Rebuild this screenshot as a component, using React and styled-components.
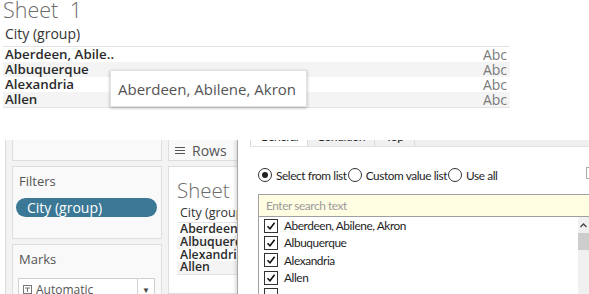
import React from "react";
import styled, { createGlobalStyle } from "styled-components";

const Global = createGlobalStyle`
  html, body { margin: 0; padding: 0; background: #fff; }
  body { width: 589px; height: 294px; overflow: hidden; font-family: "Open Sans", "Noto Sans", sans-serif; }
`;

const Page = styled.div`
  position: relative;
  width: 589px;
  height: 294px;
  overflow: hidden;
  display: flex;
  flex-direction: column;
`;

const TopView = styled.section`
  height: 140px;
  flex-shrink: 0;
  padding-left: 3px;
  box-sizing: border-box;
  position: relative;
`;

const SheetTitle = styled.div`
  font-family: "Open Sans", sans-serif;
  font-weight: 300;
  font-size: ${p => p.$size || 21.5}px;
  line-height: 20px;
  height: 20px;
  color: #6b6b6b;
  word-spacing: ${p => p.$ws || 0}px;
  white-space: nowrap;
`;

const HeaderCell = styled.div`
  font-size: 14px;
  line-height: 20px;
  color: #333;
  padding-left: 2px;
  margin-top: 4px;
`;

const Table = styled.div`
  width: 507px;
  margin-top: 2px;
  border-top: 1px solid #e3e3e3;
  border-bottom: 1px solid #e3e3e3;
`;

const Row = styled.div`
  display: flex;
  justify-content: space-between;
  align-items: center;
  height: 15px;
  background: ${p => (p.$alt ? "#f4f4f4" : "#fff")};
`;

const RowLabel = styled.span`
  font-size: 13.3px;
  font-weight: 600;
  color: #2b2b2b;
  padding-left: 2px;
  line-height: 15px;
`;

const RowValue = styled.span`
  font-size: 14px;
  color: #7a7a7a;
  padding-right: 3px;
  line-height: 15px;
`;

const Tooltip = styled.div`
  position: absolute;
  left: 110px;
  top: 70px;
  width: 197px;
  height: 37px;
  box-sizing: border-box;
  background: #fff;
  box-shadow: 0 1px 3px rgba(0, 0, 0, 0.3);
  border: 1px solid #e2e2e2;
  display: flex;
  align-items: center;
  padding-left: 7px;
  font-size: 15px;
  color: #555;
`;

const Bottom = styled.section`
  flex: 1;
  min-height: 0;
  display: flex;
  position: relative;
  overflow: hidden;
`;

const Sidebar = styled.div`
  margin-left: 5px;
  width: 160px;
  box-sizing: border-box;
  flex-shrink: 0;
  border-left: 1px solid #dcdcdc;
  background: #f3f3f3;
  padding-left: 6px;
  padding-right: 3px;
  display: flex;
  flex-direction: column;
  gap: 5px;
`;

const Panel = styled.div`
  background: #f9f9f9;
  border: 1px solid #dedede;
  border-top: ${p => (p.$open ? "none" : "1px solid #dedede")};
  height: ${p => p.$h}px;
  box-sizing: border-box;
  padding: ${p => p.$pad || "0"};
  flex-shrink: 0;
`;

const PanelTitle = styled.div`
  font-size: 13px;
  color: #555;
  padding-left: 6px;
  line-height: 18px;
`;

const Pill = styled.div`
  margin: ${p => p.$top}px 4px 0 3px;
  height: 19px;
  border-radius: 10px;
  background: #3a7896;
  color: #fff;
  font-size: 14px;
  line-height: 19px;
  padding-left: 11px;
`;

const Dropdown = styled.div`
  margin: 10px 6px 0 5px;
  height: 20px;
  border: 1px solid #cfcfcf;
  background: #fff;
  display: flex;
  align-items: center;
  font-size: 12px;
  color: #555;
`;

const DropText = styled.span`
  flex: 1;
  padding-left: 4px;
  display: flex;
  align-items: center;
  gap: 4px;
`;

const DropArrow = styled.span`
  width: 16px;
  border-left: 1px solid #cfcfcf;
  height: 100%;
  display: flex;
  align-items: center;
  justify-content: center;
  font-size: 8px;
  color: #444;
`;

const Middle = styled.div`
  width: 72px;
  padding-left: 3px;
  box-sizing: border-box;
  background: #f3f3f3;
  display: flex;
  flex-direction: column;
  gap: 5px;
  flex-shrink: 0;
`;

const Shelf = styled.div`
  height: 21px;
  flex-shrink: 0;
  background: #f9f9f9;
  border: 1px solid #dedede;
  border-top: none;
  border-right: none;
  box-sizing: border-box;
  display: flex;
  align-items: center;
  padding-left: 6px;
  gap: 7px;
  font-size: 14px;
  color: #555;
`;

const SheetPane = styled.div`
  flex: 1;
  background: #fff;
  border: 1px solid #dedede;
  border-right: none;
  padding: 13px 0 0 8px;
  overflow: hidden;
  white-space: nowrap;
`;

const MiniHeader = styled.div`
  font-size: 12.5px;
  color: #333;
  line-height: 14px;
  margin-top: 6px;
  margin-left: 3px;
`;

const MiniTable = styled.div`
  margin-top: 2px;
  border-top: 1px solid #e3e3e3;
  border-bottom: 1px solid #e3e3e3;
`;

const MiniRow = styled.div`
  font-size: 12.3px;
  font-weight: 600;
  color: #2b2b2b;
  line-height: 12.8px;
  height: 12.8px;
  padding-left: 3px;
  background: ${p => (p.$alt ? "#f4f4f4" : "#fff")};
`;

const Dialog = styled.div`
  flex: 1;
  background: #fff;
  border-left: 1px solid #a8a8a8;
  box-shadow: -2px 0 3px rgba(0, 0, 0, 0.12);
  overflow: hidden;
  display: flex;
  flex-direction: column;
  font-family: "Lato", "Open Sans", sans-serif;
  letter-spacing: -0.4px;
`;

const TabBar = styled.div`
  display: flex;
  height: 18px;
  margin-top: -11px;
  padding-left: 12px;
  flex-shrink: 0;
`;

const TabStrip = styled.div`
  flex: 1;
  display: flex;
  background: #efefef;
  border-bottom: 1px solid #e4e4e4;
`;

const Tab = styled.div`
  width: ${p => p.$w}px;
  box-sizing: border-box;
  border-right: 1px solid #d9d9d9;
  border-left: ${p => (p.$first ? "1px solid #d9d9d9" : "none")};
  background: ${p => (p.$active ? "#fff" : "#f0f0f0")};
  font-size: 12px;
  color: #222;
  text-align: center;
  line-height: 16px;
`;

const RadioRow = styled.div`
  display: flex;
  align-items: center;
  margin-top: 20px;
  padding-left: 20px;
  font-size: 11.8px;
  color: #1e1e1e;
  height: 16px;
  position: relative;
  flex-shrink: 0;
`;

const RadioItem = styled.label`
  display: flex;
  align-items: center;
  gap: 4px;
  margin-right: 1px;
`;

const RadioCircle = styled.span`
  width: 12px;
  height: 12px;
  border-radius: 50%;
  border: 1px solid #333;
  display: inline-flex;
  align-items: center;
  justify-content: center;
  &::after {
    content: "";
    width: 6px;
    height: 6px;
    border-radius: 50%;
    background: ${p => (p.$on ? "#222" : "transparent")};
  }
`;

const ExcludeBox = styled.span`
  position: absolute;
  left: 348px;
  top: 0px;
  width: 10px;
  height: 10px;
  border: 1px solid #aaa;
  border-right: none;
`;

const ListWrap = styled.div`
  margin-top: 11px;
  margin-left: 20px;
  border: 1px solid #a0a0a0;
  border-right: none;
  border-bottom: none;
  flex: 1;
  display: flex;
  flex-direction: column;
`;

const Search = styled.div`
  height: 21px;
  background: #fffde2;
  border-bottom: 1px solid #a0a0a0;
  font-size: 11.8px;
  color: #9a9a9a;
  line-height: 21px;
  padding-left: 7px;
  flex-shrink: 0;
`;

const ListBody = styled.div`
  flex: 1;
  display: flex;
`;

const Items = styled.div`
  flex: 1;
`;

const Item = styled.div`
  display: flex;
  align-items: center;
  height: 17.3px;
  padding-left: 5px;
  gap: 6px;
  font-size: 11.8px;
  color: #1e1e1e;
`;

const Check = styled.span`
  width: 12px;
  height: 12px;
  border: 1px solid #333;
  display: inline-flex;
  align-items: center;
  justify-content: center;
  background: #fff;
  svg { display: block; }
`;

const Scrollbar = styled.div`
  width: 11px;
  background: #f0f0f0;
  display: flex;
  flex-direction: column;
  align-items: center;
`;

const ScrollArrow = styled.div`
  height: 16px;
  display: flex;
  align-items: center;
  justify-content: center;
`;

const Thumb = styled.div`
  width: 100%;
  height: 17px;
  background: #cdcdcd;
`;

const CheckMark = () => (
  <svg width="10" height="10" viewBox="0 0 10 10">
    <path d="M1.5 5.2 L4 7.8 L8.6 1.8" fill="none" stroke="#111" strokeWidth="1.6" />
  </svg>
);

const cities = ["Aberdeen, Abilene, Akron", "Albuquerque", "Alexandria", "Allen", ""];

export default function App() {
  return (
    <Page>
      <Global />
      <TopView>
        <SheetTitle $ws={6}>Sheet 1</SheetTitle>
        <HeaderCell>City (group)</HeaderCell>
        <Table>
          <Row><RowLabel>Aberdeen, Abile..</RowLabel><RowValue>Abc</RowValue></Row>
          <Row $alt><RowLabel>Albuquerque</RowLabel><RowValue>Abc</RowValue></Row>
          <Row><RowLabel>Alexandria</RowLabel><RowValue>Abc</RowValue></Row>
          <Row $alt><RowLabel>Allen</RowLabel><RowValue>Abc</RowValue></Row>
        </Table>
        <Tooltip>Aberdeen, Abilene, Akron</Tooltip>
      </TopView>
      <Bottom>
        <Sidebar>
          <Panel $open $h={21} />
          <Panel $h={73} $pad="5px 0 0 0">
            <PanelTitle>Filters</PanelTitle>
            <Pill $top={8}>City (group)</Pill>
          </Panel>
          <Panel $h={60} $pad="5px 0 0 0">
            <PanelTitle>Marks</PanelTitle>
            <Dropdown>
              <DropText>
                <svg width="9" height="9" viewBox="0 0 9 9"><rect x="0.5" y="0.5" width="8" height="8" fill="none" stroke="#777" /><path d="M2 3h5M4.5 3v4" stroke="#777" /></svg>
                Automatic
              </DropText>
              <DropArrow>▼</DropArrow>
            </Dropdown>
          </Panel>
        </Sidebar>
        <Middle>
          <Shelf>
            <svg width="10" height="9" viewBox="0 0 10 9"><path d="M0 1.5h10M0 4.5h10M0 7.5h10" stroke="#555" strokeWidth="1.2" /></svg>
            Rows
          </Shelf>
          <SheetPane>
            <SheetTitle $size={20.5}>Sheet 1</SheetTitle>
            <MiniHeader>City (group)</MiniHeader>
            <MiniTable>
              <MiniRow>Aberdeen, Abilene</MiniRow>
              <MiniRow $alt>Albuquerque</MiniRow>
              <MiniRow>Alexandria</MiniRow>
              <MiniRow $alt>Allen</MiniRow>
            </MiniTable>
          </SheetPane>
        </Middle>
        <Dialog>
          <TabBar>
            <TabStrip>
              <Tab $w={58} $first $active>General</Tab>
              <Tab $w={67}>Condition</Tab>
              <Tab $w={40}>Top</Tab>
            </TabStrip>
          </TabBar>
          <RadioRow>
            <RadioItem><RadioCircle $on />Select from list</RadioItem>
            <RadioItem><RadioCircle />Custom value list</RadioItem>
            <RadioItem><RadioCircle />Use all</RadioItem>
            <ExcludeBox />
          </RadioRow>
          <ListWrap>
            <Search>Enter search text</Search>
            <ListBody>
              <Items>
                {cities.map((c, i) => (
                  <Item key={i}>
                    <Check>{c ? <CheckMark /> : null}</Check>
                    {c}
                  </Item>
                ))}
              </Items>
              <Scrollbar>
                <ScrollArrow>
                  <svg width="7" height="5" viewBox="0 0 7 5"><path d="M0.5 4 L3.5 1 L6.5 4" fill="none" stroke="#444" strokeWidth="1.3" /></svg>
                </ScrollArrow>
                <Thumb />
              </Scrollbar>
            </ListBody>
          </ListWrap>
        </Dialog>
      </Bottom>
    </Page>
  );
}
